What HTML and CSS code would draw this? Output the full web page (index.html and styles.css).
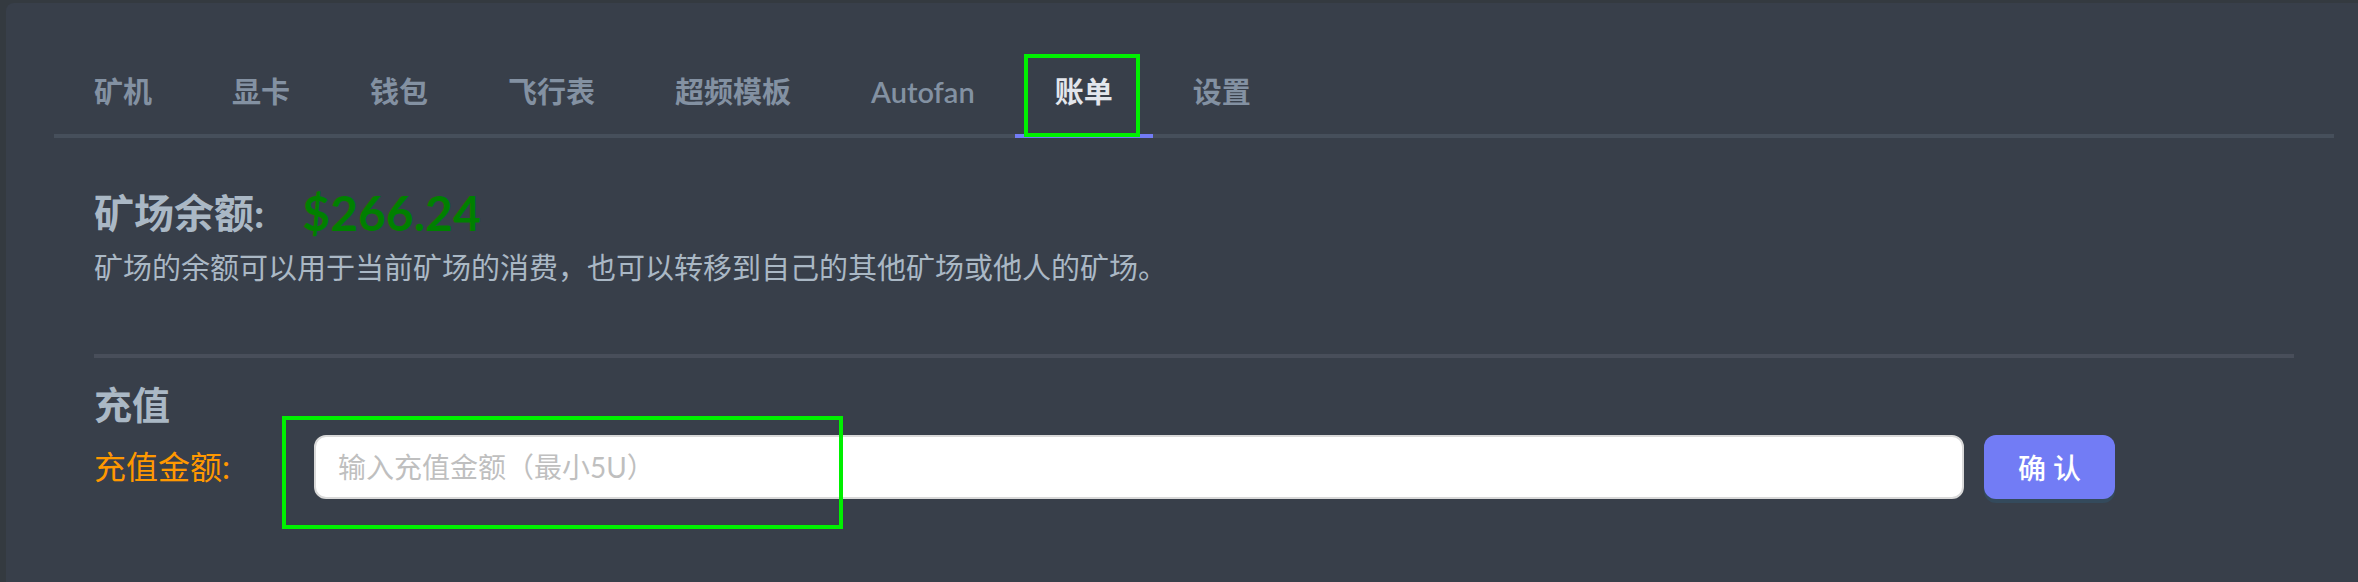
FILE: index.html
```html
<!DOCTYPE html>
<html lang="zh-CN">
<head>
<meta charset="utf-8">
<title>账单</title>
<link rel="stylesheet" href="styles.css">
</head>
<body>
<main class="panel">
  <nav class="tabs">
    <a class="tab" href="#rigs">矿机</a>
    <a class="tab" href="#gpus">显卡</a>
    <a class="tab" href="#wallets">钱包</a>
    <a class="tab" href="#flight">飞行表</a>
    <a class="tab" href="#oc">超频模板</a>
    <a class="tab" href="#autofan">Autofan</a>
    <a class="tab tab-active" href="#billing" aria-current="page">账单<span class="mark mark-tab"></span></a>
    <a class="tab" href="#settings">设置</a>
  </nav>
  <div class="content">
    <section class="balance">
      <h1 class="balance-title">矿场余额: <span class="amount">$266.24</span></h1>
      <p class="note">矿场的余额可以用于当前矿场的消费，也可以转移到自己的其他矿场或他人的矿场。</p>
    </section>
    <section class="recharge">
      <h2 class="recharge-title">充值</h2>
      <form class="row">
        <label class="label" for="amount">充值金额:</label>
        <div class="field">
          <input class="input" id="amount" type="text" placeholder="输入充值金额（最小5U）">
          <span class="mark mark-field"></span>
        </div>
        <button class="confirm" type="button">确 认</button>
      </form>
    </section>
  </div>
</main>
</body>
</html>
```
FILE: styles.css
```css
* {
  box-sizing: border-box;
}

body {
  margin: 0;
  padding: 3px 0 0 6px;
  min-height: 100vh;
  display: flex;
  background: #343a40;
  color: #aab8c5;
  font-family: Lato, "Noto Sans CJK SC", sans-serif;
}

.panel {
  flex: 1;
  padding: 51px 24px 0 48px;
  border-top-left-radius: 8px;
  background: #383f4a;
}

.tabs {
  display: flex;
  border-bottom: 4px solid #464f5b;
}

.tab {
  position: relative;
  margin-bottom: -4px;
  padding: 16px 40px 20px;
  border-bottom: 4px solid transparent;
  color: #8391a2;
  font-size: 29px;
  font-weight: 600;
  line-height: 44px;
  text-decoration: none;
}

.tab-active {
  border-bottom-color: #727cf5;
  color: #e3e6ec;
}

.mark {
  position: absolute;
  border: 4px solid #00f000;
  pointer-events: none;
}

.mark-tab {
  inset: 0 13px -3px 9px;
}

.mark-field {
  top: -19px;
  left: -32px;
  width: 34%;
  bottom: -30px;
}

.content {
  padding: 46px 40px 0;
}

.balance {
  padding-bottom: 64px;
  border-bottom: 4px solid #484e5a;
}

.balance-title {
  display: flex;
  align-items: center;
  gap: 38px;
  margin: 0;
  font-size: 40px;
  font-weight: 700;
  line-height: 58px;
}

.amount {
  color: #008000;
  font-size: 48px;
}

.note {
  margin: 0;
  padding-top: 4px;
  font-size: 29px;
  line-height: 44px;
}

.recharge-title {
  margin: 0;
  padding: 25px 0 10px;
  font-size: 38px;
  font-weight: 700;
  line-height: 42px;
}

.row {
  display: flex;
  align-items: center;
  margin: 0;
}

.label {
  width: 10%;
  color: #ff9800;
  font-size: 32px;
  line-height: 48px;
}

.field {
  position: relative;
  width: 75%;
}

.input {
  display: block;
  width: 100%;
  height: 64px;
  padding: 0 22px;
  border: 2px solid #d9d9d9;
  border-radius: 12px;
  background: #fff;
  color: #333;
  font: inherit;
  font-size: 28px;
}

.input::placeholder {
  color: #bfbfbf;
}

.confirm {
  height: 64px;
  margin-left: 20px;
  padding: 0 34px;
  border: 0;
  border-radius: 12px;
  background: #727cf5;
  box-shadow: 0 4px 0 #344a5c;
  color: #fff;
  font: inherit;
  font-size: 28px;
  font-weight: 500;
}
```
